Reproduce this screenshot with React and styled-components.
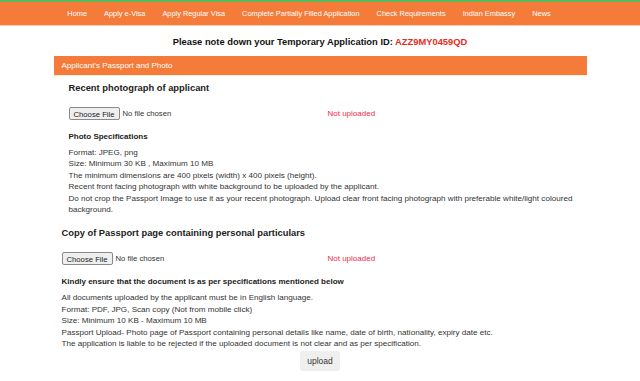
import React from 'react';
import styled, { createGlobalStyle } from 'styled-components';

const GlobalStyle = createGlobalStyle`
    html, body {
        margin: 0;
        padding: 0;
        background: #ffffff;
        font-family: "Liberation Sans", Arial, sans-serif;
    }
`;

const ORANGE = '#f47b3a';

const TopStrip = styled.div`
    height: 2px;
    background: #5cb85c;
`;

const NavBar = styled.nav`
    height: 23px;
    background: ${ORANGE};
    border-bottom: 1px solid #fbcfb3;
    display: flex;
    align-items: center;
    justify-content: center;
    gap: 17px;
    padding-right: 22px;
`;

const NavLink = styled.a`
    color: #ffffff;
    font-size: 7.4px;
    text-decoration: none;
    white-space: nowrap;
`;

const Notice = styled.h1`
    margin: 10px 0 0;
    text-align: center;
    font-size: 9.35px;
    line-height: 12px;
    font-weight: 700;
    color: #111111;
`;

const AppId = styled.span`
    color: #ec2a24;
`;

const Container = styled.div`
    width: 533px;
    margin: 8px auto 0;
`;

const SectionBar = styled.div`
    height: 19px;
    line-height: 19px;
    padding: 0 8px;
    background: ${ORANGE};
    border-bottom: 1px solid #fdf0d6;
    color: #ffffff;
    font-size: 8px;
`;

const Section = styled.section`
    padding: 0 8px 0 ${p => p.$indent}px;
`;

const SectionTitle = styled.h2`
    margin: ${p => p.$top}px 0 0;
    font-size: 9.35px;
    line-height: 12px;
    font-weight: 700;
    color: #222222;
`;

const UploadRow = styled.div`
    margin-top: 13px;
    height: 13px;
    display: grid;
    grid-template-columns: ${p => 274 - p.$indent}px 1fr;
    align-items: center;
`;

const FileInput = styled.input`
    display: block;
    height: 13px;
    margin: 0;
    padding: 0;
    font-family: "Liberation Sans", Arial, sans-serif;
    font-size: 7.7px;
    line-height: 13px;
    color: #333333;

    &::file-selector-button {
        font: inherit;
        color: #222222;
        height: 13px;
        padding: 0 4px;
        margin: 0 3px 0 0;
        border: 1px solid #8a8a8a;
        border-radius: 2px;
        background: #efefef;
        vertical-align: top;
    }
`;

const Status = styled.span`
    font-size: 8px;
    line-height: 13px;
    color: #ef2b4b;
`;

const SpecTitle = styled.h3`
    margin: 11px 0 0;
    font-size: 8px;
    line-height: 11px;
    font-weight: 700;
    color: #222222;
`;

const SpecList = styled.div`
    margin-top: 5px;
    font-size: 8.1px;
    line-height: 11.4px;
    color: #333333;
`;

const SpecLine = styled.div``;

const Actions = styled.div`
    margin-top: 2px;
    display: flex;
    justify-content: center;
`;

const UploadButton = styled.button`
    height: 20px;
    padding: 0 7px;
    border: none;
    border-radius: 3px;
    background: #efefef;
    color: #333333;
    font-family: "Liberation Sans", Arial, sans-serif;
    font-size: 8.5px;
`;

const navItems = [
    'Home',
    'Apply e-Visa',
    'Apply Regular Visa',
    'Complete Partially Filled Application',
    'Check Requirements',
    'Indian Embassy',
    'News'
];

const photoSpecs = [
    'Format: JPEG, png',
    'Size: Minimum 30 KB , Maximum 10 MB',
    'The minimum dimensions are 400 pixels (width) x 400 pixels (height).',
    'Recent front facing photograph with white background to be uploaded by the applicant.',
    'Do not crop the Passport Image to use it as your recent photograph. Upload clear front facing photograph with preferable white/light coloured background.'
];

const passportSpecs = [
    'All documents uploaded by the applicant must be in English language.',
    'Format: PDF, JPG, Scan copy (Not from mobile click)',
    'Size: Minimum 10 KB - Maximum 10 MB',
    'Passport Upload- Photo page of Passport containing personal details like name, date of birth, nationality, expiry date etc.',
    'The application is liable to be rejected if the uploaded document is not clear and as per specification.'
];

const UploadBlock = ({ indent, title, titleTop, specTitle, specs }) => (
    <Section $indent={indent}>
        <SectionTitle $top={titleTop}>{title}</SectionTitle>
        <UploadRow $indent={indent}>
            <FileInput type="file" />
            <Status>Not uploaded</Status>
        </UploadRow>
        <SpecTitle>{specTitle}</SpecTitle>
        <SpecList>
            {specs.map(s => <SpecLine key={s}>{s}</SpecLine>)}
        </SpecList>
    </Section>
);

export default function App() {
    return (
        <>
            <GlobalStyle />
            <TopStrip />
            <NavBar>
                {navItems.map(item => <NavLink key={item} href="#">{item}</NavLink>)}
            </NavBar>
            <Notice>
                Please note down your Temporary Application ID: <AppId>AZZ9MY0459QD</AppId>
            </Notice>
            <Container>
                <SectionBar>Applicant's Passport and Photo</SectionBar>
                <UploadBlock
                    indent={15}
                    titleTop={6}
                    title="Recent photograph of applicant"
                    specTitle="Photo Specifications"
                    specs={photoSpecs}
                />
                <UploadBlock
                    indent={8}
                    titleTop={12}
                    title="Copy of Passport page containing personal particulars"
                    specTitle="Kindly ensure that the document is as per specifications mentioned below"
                    specs={passportSpecs}
                />
                <Actions>
                    <UploadButton type="button">upload</UploadButton>
                </Actions>
            </Container>
        </>
    );
}
